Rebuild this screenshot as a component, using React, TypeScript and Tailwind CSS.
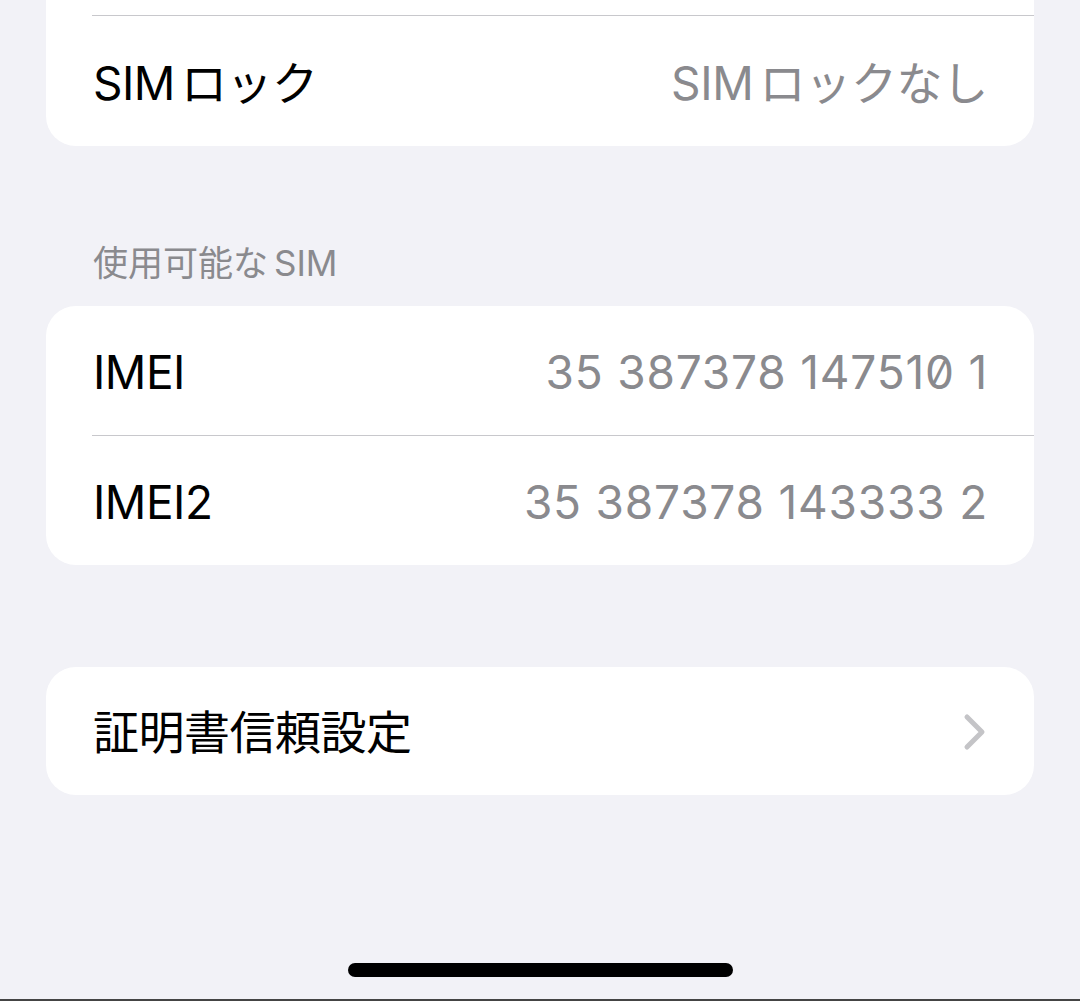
import React from 'react';

const font = "font-['Inter','Noto_Sans_CJK_JP',sans-serif]";

function Row({ label, value, zero }: { label: string; value?: string; zero?: boolean }) {
  return (
    <div className="flex h-[129px] items-center justify-between pl-[47px] pr-[46px] pt-[4px]">
      <span className="text-[46px] tracking-[-0.5px] text-black">{label}</span>
      {value && (
        <span
          className={`text-[46px] tracking-[0.8px] text-[#8a8a8e] ${zero ? "[font-feature-settings:'zero']" : ''}`}
        >
          {value}
        </span>
      )}
    </div>
  );
}

export default function App() {
  return (
    <div className={`relative flex h-[1001px] w-[1080px] flex-col overflow-hidden bg-[#f2f2f7] px-[46px] ${font}`}>
      {/* previous group (cut off at top) */}
      <div className="rounded-b-[30px] bg-white">
        <div className="h-[15px]" />
        <div className="ml-[46px] h-px bg-[#c8c8cc]" />
        <div className="flex h-[130px] items-center justify-between pl-[47px] pr-[46px] pt-[4px]">
          <span className="text-[46px] tracking-[-0.5px] text-black">
            SIM<span className="ml-[6px]">ロック</span>
          </span>
          <span className="text-[46px] tracking-[-0.3px] text-[#8a8a8e]">
            SIM<span className="ml-[6px]">ロックなし</span>
          </span>
        </div>
      </div>

      <div className="pl-[47px] pt-[92px] pb-[18px] text-[35px] leading-[50px] text-[#8a8a8e]">
        使用可能な<span className="ml-[6px]">SIM</span>
      </div>

      <div className="rounded-[30px] bg-white">
        <Row label="IMEI" value="35 387378 147510 1" zero />
        <div className="ml-[46px] h-px bg-[#c8c8cc]" />
        <Row label="IMEI2" value="35 387378 143333 2" />
      </div>

      <div className="mt-[102px] rounded-[30px] bg-white">
        <div className="flex h-[128px] items-center justify-between pl-[47px] pr-[46px] pt-[2px]">
          <span className="text-[46px] tracking-[-0.5px] text-black">証明書信頼設定</span>
          <svg width="24" height="38" viewBox="0 0 24 38" className="mr-[1px]">
            <path d="M4 4 L19 19 L4 34" fill="none" stroke="#c4c4c7" strokeWidth="5" strokeLinecap="round" strokeLinejoin="round" />
          </svg>
        </div>
      </div>

      <div className="mt-auto mb-[24px] flex justify-center">
        <div className="h-[14px] w-[385px] rounded-full bg-black" />
      </div>
      <div className="absolute bottom-0 left-0 h-[2px] w-full bg-[#444]" />
    </div>
  );
}
